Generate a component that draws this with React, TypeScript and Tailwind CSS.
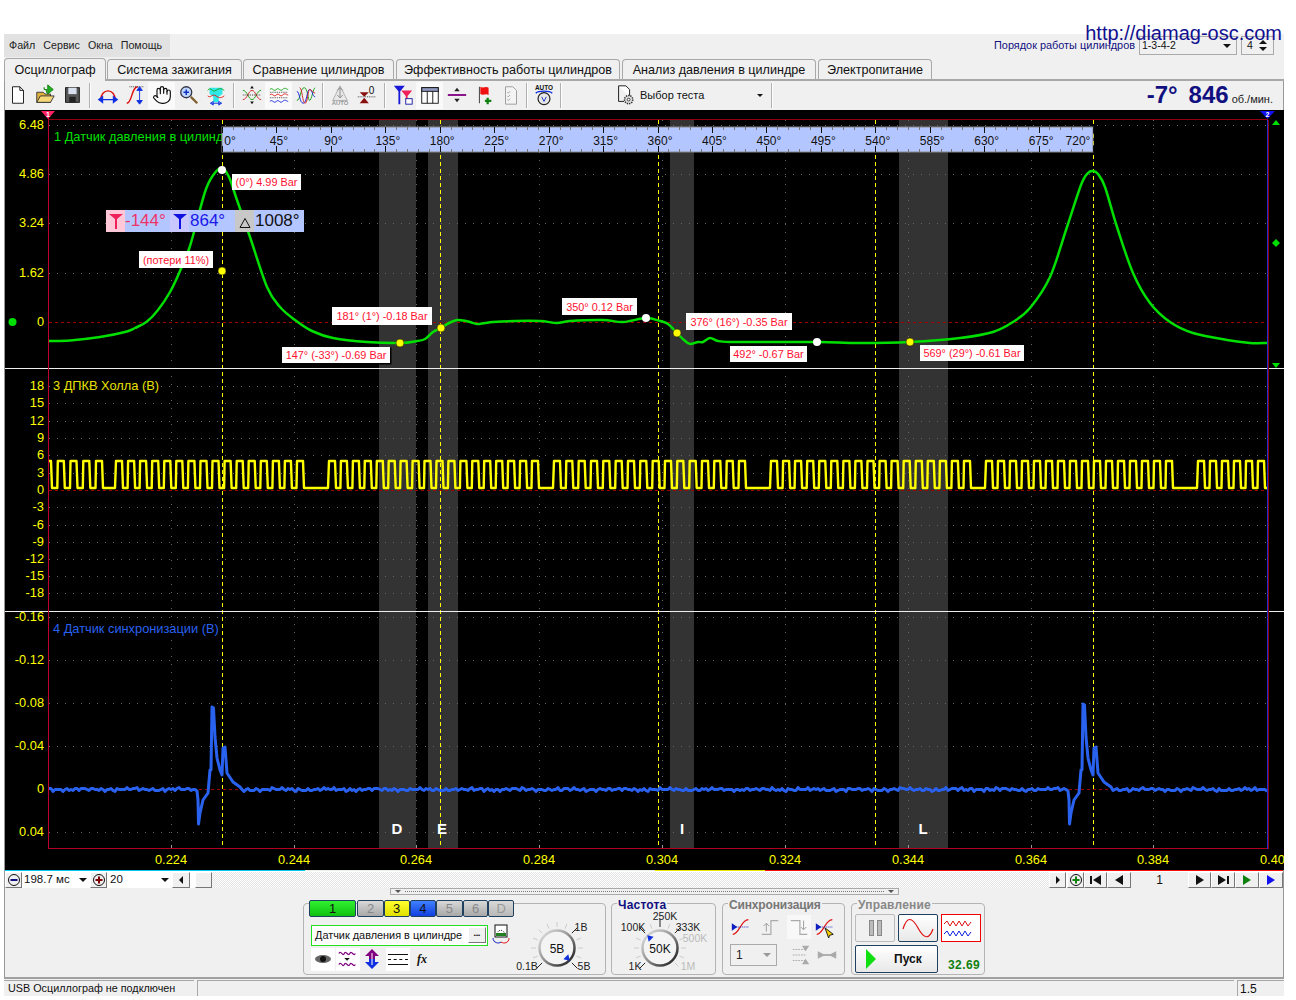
import React from "react";
import { Hand } from "lucide-react";

const YEL = "#ffff00";
const GRN = "#00e000";
const BLU = "#2a62f0";
const RED = "#ff1030";

function smooth(p: number[][]): string {
  let d = `M${p[0][0]} ${p[0][1]}`;
  for (let i = 0; i < p.length - 1; i++) {
    const a = p[Math.max(i - 1, 0)], b = p[i], c = p[i + 1], e = p[Math.min(i + 2, p.length - 1)];
    const k = 1 / 6;
    d += ` C${(b[0] + (c[0] - a[0]) * k).toFixed(1)} ${(b[1] + (c[1] - a[1]) * k).toFixed(1)} ${(c[0] - (e[0] - b[0]) * k).toFixed(1)} ${(c[1] - (e[1] - b[1]) * k).toFixed(1)} ${c[0]} ${c[1]}`;
  }
  return d;
}

const pressure = [
  [49, 341], [70, 340.5], [100, 337], [125, 332], [135, 328], [147, 321.5], [158, 310], [170, 292], [180, 271], [190, 246], [205, 192], [214, 174], [222, 168], [229, 177], [237, 200], [250, 237], [267, 287], [280, 307], [295, 320], [312, 331], [333, 338], [367, 342], [400, 343], [417, 341], [425, 339], [433, 332], [441, 328], [449, 323], [457, 320], [463, 320.5], [470, 322], [477, 324], [485, 323], [493, 322], [515, 321], [540, 321], [557, 323], [570, 321], [603, 320], [623, 322], [646, 318], [660, 321], [668, 324], [677, 333], [684, 340], [690, 344], [698, 342], [703, 342], [710, 338], [718, 341], [730, 342], [770, 342], [820, 342], [860, 343], [910, 342], [960, 338], [993, 332], [1013, 322], [1030, 308], [1050, 277], [1067, 227], [1081, 185], [1088, 173], [1093, 171], [1098, 174], [1105, 187], [1117, 227], [1133, 273], [1150, 303], [1170, 322], [1193, 333], [1227, 340], [1250, 343], [1267, 343],
];

function yellowPath(): string {
  const gaps = [[102, 115], [303, 328], [538, 553], [745, 770], [970, 985], [1172, 1197], [1300, 1300]];
  const H = 461, L = 488;
  let start = 45;
  let d = `M${start} ${H}`;
  for (const [fall, rise] of gaps) {
    const span = fall - start - 6;
    const n = Math.max(Math.round(span / 12.2), 0);
    const per = n ? span / n : 0;
    for (let i = 0; i < n; i++) {
      const x = start + per * i;
      d += ` L${(x + 6).toFixed(1)} ${H} L${(x + 7).toFixed(1)} ${L} L${(x + per - 0.5).toFixed(1)} ${L} L${(x + per).toFixed(1)} ${H}`;
    }
    d += ` L${fall} ${H} L${fall + 1} ${L} L${rise} ${L} L${rise + 1} ${H}`;
    start = rise + 1;
  }
  return d;
}

function bluePath(): string {
  const pts: number[][] = [];
  const noise = (x: number) => Math.round(Math.sin(x * 0.73) * 0.9 + Math.sin(x * 1.91 + 1) * 0.8 + Math.sin(x * 0.13) * 0.5);
  const spike = (o: number, s: number) => [
    [197 + o, 791], [198 + o, 800], [198.5 + o, 824], [200 + o, 813], [203 + o, 800], [208 + o, 793], [210 + o, 770],
    [211 + o, 770], [212 + o, 707 - s], [213.5 + o, 708 - s], [215 + o, 737], [217 + o, 758], [220 + o, 770], [222 + o, 775], [223 + o, 748], [225 + o, 747], [227 + o, 773], [233 + o, 782], [240 + o, 787],
  ];
  for (let x = 49; x < 196; x += 2) pts.push([x, 789.5 + noise(x)]);
  pts.push(...spike(0, 0));
  for (let x = 242; x < 1067; x += 2) pts.push([x, 789.5 + noise(x)]);
  pts.push(...spike(871, 3));
  for (let x = 1113; x <= 1267; x += 2) pts.push([x, 789.5 + noise(x)]);
  return "M" + pts.map((p) => `${p[0]} ${p[1].toFixed(1)}`).join(" L");
}

function Callout({ x, y, w, h, t, shadow }: { x: number; y: number; w: number; h: number; t: string; shadow?: boolean }) {
  return (
    <g>
      {shadow && <rect x={x + 1} y={y + 1} width={w} height={h} fill="#000" stroke="#000" />}
      <rect x={x} y={y} width={w} height={h} fill="#fff" />
      <text x={x + w / 2} y={y + h / 2 + 4} textAnchor="middle" fontSize="10.9" fill={RED}>{t}</text>
    </g>
  );
}

function Scope() {
  const vx = [171, 294, 416, 539, 662, 785, 908, 1031, 1153];
  const xl = ["0.224", "0.244", "0.264", "0.284", "0.304", "0.324", "0.344", "0.364", "0.384"];
  const hTop = [125, 174, 223, 273];
  const hMid = [386, 403, 421, 438, 455, 473, 507, 525, 542, 559, 576, 593];
  const hBot = [617, 660, 703, 746, 832];
  const deg = [0, 45, 90, 135, 180, 225, 270, 315, 360, 405, 450, 495, 540, 585, 630, 675, 720];
  const rx = (i: number) => 222 + i * 54.44;
  return (
    <svg viewBox="5 110 1279 760" width={1279} height={760} className="block bg-black">
      <defs>
        <clipPath id="plot"><rect x="49" y="120" width="1218" height="728" /></clipPath>
      </defs>
      {[[379, 37], [428, 30], [670, 24], [899, 49]].map(([x, w]) => (
        <rect key={x} x={x} y={120} width={w} height={728} fill="#333" />
      ))}
      {vx.map((x) => <line key={x} x1={x + 0.5} x2={x + 0.5} y1={120} y2={848} stroke="#666" strokeDasharray="1 7" />)}
      {[...hTop, ...hMid, ...hBot].map((y) => <line key={y} x1={49} x2={1267} y1={y + 0.5} y2={y + 0.5} stroke="#666" strokeDasharray="1 7" />)}
      {[322, 490, 789].map((y) => <line key={y} x1={49} x2={1267} y1={y + 0.5} y2={y + 0.5} stroke="#a00000" strokeDasharray="3 3" />)}
      {[222, 440, 658, 875, 1093].map((x) => <line key={x} x1={x + 0.5} x2={x + 0.5} y1={120} y2={848} stroke={YEL} strokeDasharray="4 3" />)}
      <g clipPath="url(#plot)" fill="none" strokeLinejoin="round">
        <path d={yellowPath()} stroke={YEL} strokeWidth={2.4} />
        <path d={smooth(pressure)} stroke={GRN} strokeWidth={2.5} />
        <path d={bluePath()} stroke={BLU} strokeWidth={3} />
      </g>
      <line x1={5} x2={1284} y1={368.5} y2={368.5} stroke="#eee" />
      <line x1={5} x2={1284} y1={611.5} y2={611.5} stroke="#eee" />
      <line x1={48} x2={1268} y1={119.5} y2={119.5} stroke="#900010" />
      <line x1={48} x2={1268} y1={848.5} y2={848.5} stroke="#b00020" />
      <line x1={48.5} x2={48.5} y1={116} y2={849} stroke="#c00030" />
      <line x1={1267.5} x2={1267.5} y1={120} y2={849} stroke="#2030d0" />
      <line x1={1268.5} x2={1268.5} y1={120} y2={849} stroke="#900010" />
      {vx.map((x) => <line key={x} x1={x + 0.5} x2={x + 0.5} y1={845} y2={848} stroke="#999" />)}

      <g fontSize="12.8">
        <text x="54" y="141" fill={GRN}>1 Датчик давления в цилиндре</text>
        <text x="53" y="390" fill="#e8e000">3 ДПКВ Холла (В)</text>
        <text x="53" y="633" fill={BLU}>4 Датчик синхронизации (В)</text>
        {[["6.48", 125], ["4.86", 174], ["3.24", 223], ["1.62", 273], ["0", 322]].map(([t, y]) => (
          <text key={t} x="44" y={Number(y) + 4} textAnchor="end" fill={YEL}>{t}</text>
        ))}
        {[["18", 386], ["15", 403], ["12", 421], ["9", 438], ["6", 455], ["3", 473], ["0", 490], ["-3", 507], ["-6", 525], ["-9", 542], ["-12", 559], ["-15", 576], ["-18", 593]].map(([t, y]) => (
          <text key={t} x="44" y={Number(y) + 4} textAnchor="end" fill={YEL}>{t}</text>
        ))}
        {[["-0.16", 617], ["-0.12", 660], ["-0.08", 703], ["-0.04", 746], ["0", 789], ["0.04", 832]].map(([t, y]) => (
          <text key={t} x="44" y={Number(y) + 4} textAnchor="end" fill={YEL}>{t}</text>
        ))}
        {vx.map((x, i) => <text key={x} x={x} y={864} textAnchor="middle" fill={YEL}>{xl[i]}</text>)}
        <text x="1276" y="864" textAnchor="middle" fill={YEL}>0.404</text>
      </g>
      {[["D", 397], ["E", 442], ["I", 682], ["L", 923]].map(([t, x]) => (
        <text key={t} x={x} y={834} textAnchor="middle" fontSize="15" fontWeight="bold" fill="#fff">{t}</text>
      ))}

      {/* ruler */}
      <rect x="222" y="127" width="871" height="25" fill="#b4c6ff" stroke="#888" />
      {Array.from({ length: 81 }).map((_, i) => {
        const x = Math.round(222 + i * 10.888) + 0.5;
        const maj = i % 5 === 0;
        return (
          <g key={i} stroke={maj ? "#111" : "#777"}>
            <line x1={x} x2={x} y1={127} y2={maj ? 133 : 130} />
            <line x1={x} x2={x} y1={maj ? 146 : 149} y2={152} />
          </g>
        );
      })}
      {deg.map((d, i) => (
        <text key={d} x={i === 0 ? 230 : i === 16 ? 1078 : rx(i) + 2.5} y={145} textAnchor="middle" fontSize="12" fill="#111">{d}°</text>
      ))}

      {/* cursor read-out */}
      <g fontSize="17">
        <rect x="106" y="210" width="198" height="22" fill="#b4c6ff" />
        <rect x="106" y="210" width="19" height="22" fill="#ffc8d8" />
        <path d="M109 214h14l-6 5v10h-2v-10z" fill="#f0205a" />
        <text x="125" y="226" fill="#ee3468">-144°</text>
        <rect x="170" y="210" width="19" height="22" fill="#c8c8ff" />
        <path d="M173 214h14l-6 5v10h-2v-10z" fill="#1010e0" />
        <text x="190" y="226" fill="#1818e8">864°</text>
        <rect x="235" y="210" width="19" height="22" fill="#c8c8c8" />
        <path d="M240 227.5h10l-5-9z" fill="none" stroke="#111" />
        <text x="255" y="226" fill="#111">1008°</text>
      </g>

      <Callout x={232} y={174} w={69} h={16} t="(0°) 4.99 Bar" />
      <Callout x={139} y={251} w={74} h={17} t="(потери 11%)" />
      <Callout x={332} y={307} w={100} h={18} t="181° (1°) -0.18 Bar" />
      <Callout x={282} y={347} w={108} h={16} t="147° (-33°) -0.69 Bar" shadow />
      <Callout x={562} y={298} w={75} h={17} t="350° 0.12 Bar" />
      <Callout x={686} y={313} w={106} h={17} t="376° (16°) -0.35 Bar" />
      <Callout x={730} y={346} w={77} h={16} t="492° -0.67 Bar" />
      <Callout x={920} y={345} w={104} h={16} t="569° (29°) -0.61 Bar" />

      {[[222, 170], [646, 318], [817, 342]].map(([x, y]) => <circle key={x} cx={x} cy={y} r={4} fill="#fff" />)}
      {[[222, 271], [400, 343], [441, 328], [677, 333], [910, 342]].map(([x, y]) => <circle key={x} cx={x} cy={y} r={4} fill={YEL} stroke="#000" strokeWidth={0.5} />)}
      <circle cx="12.5" cy="322" r="4" fill={GRN} />
      <path d="M1276 239l4 4-4 4-4-4z" fill={GRN} />
      <path d="M1272 125l4-5 4 5z" fill={GRN} />
      <path d="M1272 363l4 5 4-5z" fill={GRN} />
      <path d="M41 111h14l-7 8z" fill="#ff2060" />
      <text x="48" y="117" textAnchor="middle" fontSize="7" fontWeight="bold" fill="#fff">1</text>
      <path d="M1260 111h15l-7.5 8z" fill="#1010f0" />
      <text x="1267.5" y="117" textAnchor="middle" fontSize="7" fontWeight="bold" fill="#fff">2</text>
    </svg>
  );
}

const I = ({ children, s = 22 }: { children: React.ReactNode; s?: number }) => (
  <svg width={s} height={s} viewBox="0 0 24 24" fill="none">{children}</svg>
);

function Sep({ w }: { w: number }) {
  return <div className="flex h-[25px] justify-center" style={{ width: w }}><div className="h-full w-[2px] border-l border-r border-l-[#b0b0b0] border-r-white" /></div>;
}
function Tb({ children, on }: { children: React.ReactNode; on?: boolean }) {
  return <div className={`flex h-[27px] w-[27px] shrink-0 items-center justify-center ${on ? "bg-[#fafafa]" : ""}`}>{children}</div>;
}

function Toolbar() {
  return (
    <div className="flex h-[28px] items-center bg-[#f0f0f0]">
      <div className="-ml-[1px] flex items-center">
        <Tb><I><path d="M6 3h8l4 4v14H6z" fill="#fff" stroke="#111" /><path d="M14 3v4h4" stroke="#111" /></I></Tb>
        <Tb><I><path d="M3 20V9h7l2 2h6v9z" fill="#e0b040" stroke="#333" /><path d="M3 20l4-7h15l-4 7z" fill="#f4d878" stroke="#333" /><path d="M14 10V6h-3V3.5M15 1l6 5-6 5z" fill="#20b020" stroke="#108010" /></I></Tb>
        <Tb><I><rect x="5" y="4" width="15" height="16" fill="#555" stroke="#111" /><rect x="8" y="4" width="9" height="7" fill="#d8e0f0" /><rect x="9" y="14" width="7" height="6" fill="#222" /></I></Tb>
        <Sep w={9} />
        <Tb><I><path d="M4 18C4 4 20 4 20 18" stroke="#e01010" strokeWidth="1.6" /><path d="M2 17h20M2 17l4-3v6zM22 17l-4-3v6z" stroke="#1030e0" strokeWidth="1.5" fill="#1030e0" /></I></Tb>
        <Tb><I><path d="M3 21C9 21 8 3 15 3" stroke="#e01010" strokeWidth="1.5" /><path d="M6 3h16" stroke="#333" strokeDasharray="1 1" /><path d="M17 5v15M17 3l-3 4h6zM17 22l-3-4h6z" stroke="#1030e0" fill="#1030e0" /></I></Tb>
        <Tb on><Hand size={20} strokeWidth={1.4} color="#111" /></Tb>
        <Tb><I><circle cx="9" cy="9" r="6" fill="#c0d8ff" stroke="#334" strokeWidth="1.4" /><path d="M9 6v6M6 9h6" stroke="#1030c0" strokeWidth="1.6" /><path d="M14 14l7 7" stroke="#806030" strokeWidth="2.5" /></I></Tb>
        <Tb><I><path d="M5 4h14v7l-4 3v6H9v-6l-4-3z" fill="#30e8e8" /><path d="M3 7c3-5 5 3 9 0s6-2 9 0" stroke="#10a010" /><path d="M3 13c3 3 5-3 9 0s6 2 9 0" stroke="#e01010" /><path d="M6 21h12M6 21l3-2v4zM18 21l-3-2v4z" stroke="#1030e0" /></I></Tb>
        <Sep w={9} />
        <Tb><I><path d="M2 7c5 0 6 10 10 10s5-10 10-10" stroke="#10a010" /><path d="M2 17c5 0 6-10 10-10s5 10 10 10" stroke="#d02020" /><path d="M2 12h20" stroke="#333" strokeDasharray="1 1" /><path d="M12 2l-2 3h4zM12 22l-2-3h4z" fill="#111" /></I></Tb>
        <Tb on><I><path d="M2 6c3-3 4 3 7 0s4 3 7 0 4 0 6 0" stroke="#10a010" /><path d="M2 9h20M2 15h20" stroke="#333" strokeDasharray="1 1" /><path d="M2 12c3-3 4 3 7 0s4 3 7 0 4 0 6 0" stroke="#e01010" /><path d="M2 19c3-3 4 3 7 0s4 3 7 0 4 0 6 0" stroke="#1020e0" /></I></Tb>
        <Tb><I><path d="M2 18C6 18 6 4 10 4s4 14 6 14 4-14 6-14" stroke="#10a010" /><path d="M2 8c3 0 3 13 7 13s4-15 7-15 3 8 6 8" stroke="#1020e0" /><path d="M5 4c3 0 3 17 6 17s3-15 5-15 4 4 6 4" stroke="#d02020" /></I></Tb>
        <Sep w={7} />
        <Tb><I><path d="M12 2l8 16H4z" fill="#e8e8e8" stroke="#aaa" /><path d="M12 4v11M9 7l3-3 3 3M9 12l3 3 3-3" stroke="#888" /><text x="12" y="23" fontSize="6.5" fontWeight="bold" textAnchor="middle" fill="#999">AUTO</text></I></Tb>
        <Tb><I><path d="M4 9h10l-5 5zM4 21h10l-5-6z" fill="#8a1010" /><path d="M2 14h19" stroke="#333" strokeDasharray="1 1" /><text x="17" y="11" fontSize="11" textAnchor="middle" fill="#111">0</text></I></Tb>
        <Sep w={9} />
        <Tb><I><path d="M2 2h12l-5 6v14H7V8z" fill="#1818d8" /><path d="M10 7h12l-5 6v5h-2v-5z" fill="#f0205a" /><rect x="15" y="16" width="7" height="6" fill="#fff" stroke="#1818a0" /></I></Tb>
        <Tb on><I><rect x="3" y="4" width="18" height="17" fill="#fff" stroke="#111" /><rect x="3" y="4" width="18" height="4" fill="#9098c0" stroke="#111" /><path d="M9 8v13M15 8v13" stroke="#111" /></I></Tb>
        <Tb><I><path d="M2 12h20" stroke="#800080" strokeWidth="2" /><path d="M9 8h6l-3-4zM9 16h6l-3 4z" fill="#222" /></I></Tb>
        <Tb><I><path d="M7 3v18" stroke="#333" /><path d="M8 3c3 2 6-1 9 1v8c-3-2-6 1-9-1z" fill="#f01010" /><path d="M16 15v7M13 18.500h7" stroke="#108010" strokeWidth="2.5" /></I></Tb>
        <Tb><I><path d="M6 3h8l4 4v15H6z" fill="#f4f4f4" stroke="#999" /><path d="M8 9l1 1 2-2M8 13l1 1 2-2M8 17l1 1 2-2" stroke="#999" /></I></Tb>
        <Sep w={6} />
        <Tb><I><text x="12" y="6" fontSize="7" fontWeight="bold" textAnchor="middle" fill="#111">AUTO</text><path d="M3 10c3-3 15-3 18 0" stroke="#1030e0" strokeWidth="1.5" /><circle cx="12" cy="16" r="6.500" fill="#e8e8e8" stroke="#222" strokeWidth="1.3" /><path d="M9.500 14l2.500 5 2.500-5" stroke="#1030c0" /></I></Tb>
        <Sep w={8} />
      </div>
      <div className="ml-[49px] flex w-[156px] items-center text-[11px] text-[#111]">
        <I s={22}><path d="M5 2h8l4 4v8" stroke="#111" fill="#fff" /><path d="M5 2v17h6" stroke="#111" /><circle cx="16" cy="17" r="4.500" fill="#ddd" stroke="#333" strokeWidth="1.6" strokeDasharray="1.500 1" /><circle cx="16" cy="17" r="1.500" fill="#fff" stroke="#333" /></I>
        <span className="ml-[4px] grow">Выбор теста</span>
        <span className="mr-[7px] h-0 w-0 border-x-[3px] border-t-[3px] border-x-transparent border-t-[#111]" />
      </div>
      <Sep w={4} />
      <div className="ml-auto mr-[10px] flex items-baseline font-bold text-[#101080]">
        <span className="text-[24px] leading-none">-7°</span>
        <span className="ml-[11px] text-[24px] leading-none">846</span>
        <span className="ml-[3px] text-[11px] font-normal text-[#222]">об./мин.</span>
      </div>
    </div>
  );
}

function Tab({ t, w, on, ml }: { t: string; w: number; on?: boolean; ml: number }) {
  return (
    <div
      style={{ width: w, marginLeft: ml }}
      className={`flex shrink-0 items-center justify-center rounded-t-[4px] border border-b-0 border-[#a8a8a8] bg-[#f0f0f0] text-[12.6px] text-[#111] ${on ? "z-10 -mb-[2px] h-[23px]" : "h-[20px] pt-[1px]"}`}
    >
      {t}
    </div>
  );
}

const raised = "border border-t-white border-l-white border-r-[#777] border-b-[#777] bg-[#f0f0f0]";
const tri = {
  r: "border-y-[5px] border-l-[8px] border-y-transparent",
  l: "border-y-[5px] border-r-[8px] border-y-transparent",
};

function Nav({ w, children }: { w: number; children: React.ReactNode }) {
  return <div style={{ width: w }} className={`flex h-[16px] shrink-0 items-center justify-center gap-[1px] ${raised}`}>{children}</div>;
}

function ScrollRow() {
  return (
    <div className="flex h-[17px] items-center bg-white text-[11.5px] text-[#111]">
      <Nav w={17}><svg width="14" height="14"><circle cx="7" cy="7" r="5.500" fill="none" stroke="#111" /><path d="M3.500 7h7" stroke="#101080" strokeWidth="2" /></svg></Nav>
      <div className="flex w-[68px] items-center pl-[2px]"><span className="grow">198.7 мс</span><span className="mr-[3px] h-0 w-0 border-x-[4px] border-t-[4px] border-x-transparent border-t-[#111]" /></div>
      <Nav w={17}><svg width="14" height="14"><circle cx="7" cy="7" r="5.500" fill="none" stroke="#111" /><path d="M3.500 7h7M7 3.500v7" stroke="#800000" strokeWidth="2" /></svg></Nav>
      <div className="flex w-[65px] items-center pl-[3px]"><span className="grow">20</span><span className="mr-[3px] h-0 w-0 border-x-[4px] border-t-[4px] border-x-transparent border-t-[#111]" /></div>
      <Nav w={18}><span className="h-0 w-0 border-y-[4px] border-r-[4px] border-y-transparent border-r-[#111]" /></Nav>
      <div className="w-[5px]" />
      <div className={`h-[16px] w-[17px] ${raised}`} />
      <div className="h-[16px] grow bg-[repeating-conic-gradient(#e4e4e4_0%_25%,#ffffff_0%_50%)] bg-[length:2px_2px]" />
      <Nav w={17}><span className="h-0 w-0 border-y-[4px] border-l-[4px] border-y-transparent border-l-[#111]" /></Nav>
      <div className="w-[1px]" />
      <Nav w={17}><svg width="14" height="14"><circle cx="7" cy="7" r="5.500" fill="none" stroke="#111" /><path d="M3.500 7h7M7 3.500v7" stroke="#108010" strokeWidth="2" /></svg></Nav>
      <Nav w={23}><span className="h-[8px] w-[2px] bg-[#111]" /><span className={`h-0 w-0 ${tri.l} border-r-[#111]`} /></Nav>
      <Nav w={24}><span className={`h-0 w-0 ${tri.l} border-r-[#111]`} /></Nav>
      <div className="w-[57px] bg-[#f0f0f0] text-center text-[12px] leading-[16px]">1</div>
      <Nav w={23}><span className={`h-0 w-0 ${tri.r} border-l-[#111]`} /></Nav>
      <Nav w={24}><span className={`h-0 w-0 ${tri.r} border-l-[#111]`} /><span className="h-[8px] w-[2px] bg-[#111]" /></Nav>
      <Nav w={24}><span className={`h-0 w-0 ${tri.r} border-l-[#108010]`} /></Nav>
      <Nav w={24}><span className={`h-0 w-0 ${tri.r} border-l-[#1010f0]`} /></Nav>
    </div>
  );
}

function Dial({ w, cx, label, angle, labels, strong }: { w: number; cx: number; label: string; angle: number; labels: [string, number, number, string?][]; strong: number[] }) {
  const cy = 42;
  const id = `g${label}`;
  return (
    <svg width={w} height={68} className="shrink-0">
      <defs>
        <linearGradient id={id} x1="0" y1="0" x2="1" y2="1">
          <stop offset="0" stopColor="#e8e8e8" />
          <stop offset="0.45" stopColor="#999" />
          <stop offset="1" stopColor="#111" />
        </linearGradient>
      </defs>
      {Array.from({ length: 13 }).map((_, i) => {
        const a = ((135 + i * 22.5) * Math.PI) / 180;
        const s = strong.includes(i);
        return <line key={i} x1={cx + Math.cos(a) * 21} y1={cy + Math.sin(a) * 21} x2={cx + Math.cos(a) * (s ? 29 : 26)} y2={cy + Math.sin(a) * (s ? 29 : 26)} stroke={s ? "#222" : "#ccc"} />;
      })}
      <circle cx={cx} cy={cy} r={17.500} fill="#f4f4f4" stroke={`url(#${id})`} strokeWidth="2.500" />
      <text x={cx} y={cy + 4.500} fontSize="12" textAnchor="middle" fill="#111">{label}</text>
      <path
        transform={`translate(${cx + Math.cos((angle * Math.PI) / 180) * 15} ${cy + Math.sin((angle * Math.PI) / 180) * 15}) rotate(${angle + 90})`}
        d="M-3.500 2.500L0-3 3.500 2.500z"
        fill="#1030e0"
      />
      {labels.map(([t, x, y, c]) => <text key={t} x={x} y={y} fontSize="10.500" textAnchor="middle" fill={c || "#222"}>{t}</text>)}
    </svg>
  );
}

function Group({ w, title, color, tight, children }: { w: number; title?: string; color?: string; tight?: boolean; children: React.ReactNode }) {
  return (
    <div style={{ width: w }} className="relative mt-[8px] h-[72px] shrink-0 rounded-[4px] border border-[#b4b4b4]">
      {title && (
        <span style={{ color }} className={`absolute -top-[6px] left-[5px] bg-[#f0f0f0] px-[1px] text-[12px] font-bold leading-[14px] ${tight ? "tracking-[-0.15px]" : "tracking-[0.2px]"}`}>
          {title}
        </span>
      )}
      {children}
    </div>
  );
}

function ChBtn({ t, w, cls }: { t: string; w: number; cls: string }) {
  return (
    <div style={{ width: w }} className={`flex h-[17px] items-center justify-center rounded-[2px] border border-[#204060] text-[13px] ${cls}`}>{t}</div>
  );
}

function ControlPanel() {
  return (
    <div className="h-[89px] bg-[#f0f0f0]">
      <div className="ml-[385px] mt-0 flex h-[7px] w-[509px] items-center border border-[#aaa] px-[4px]">
        <span className="h-0 w-0 border-x-[3px] border-t-[3px] border-x-transparent border-t-[#555]" />
        <span className="ml-[4px] grow border-t border-dotted border-[#777]" />
        <span className="ml-[4px] h-0 w-0 border-x-[3px] border-t-[3px] border-x-transparent border-t-[#555]" />
      </div>
      <div className="flex pl-[298px]">
        <Group w={303}>
          <div className="flex">
            <div className="w-[210px] pl-[5px]">
              <div className="-mt-[4px] flex">
                <ChBtn t="1" w={48} cls="bg-[linear-gradient(#30f030,#10c010)] text-[#111]" />
                <div className="w-[1px]" />
                <ChBtn t="2" w={27} cls="bg-[linear-gradient(#d8d8d8,#a8a8a8)] text-[#888]" />
                <ChBtn t="3" w={26} cls="bg-[linear-gradient(#ffff30,#e0e000)] text-[#111]" />
                <ChBtn t="4" w={27} cls="bg-[linear-gradient(#4080ff,#1040e0)] text-[#111]" />
                <ChBtn t="5" w={27} cls="bg-[linear-gradient(#d8d8d8,#a8a8a8)] text-[#888]" />
                <ChBtn t="6" w={26} cls="bg-[linear-gradient(#d8d8d8,#a8a8a8)] text-[#888]" />
                <ChBtn t="D" w={26} cls="bg-[linear-gradient(#d8d8d8,#b8b8b8)] text-[#999]" />
              </div>
              <div className="mt-[7px] flex items-center">
                <div className="ml-[2px] flex h-[21px] w-[177px] shrink-0 items-center justify-between border border-[#20e020] bg-white pl-[3px] pr-[1px] text-[10.9px] text-[#111]">
                  <span className="whitespace-nowrap">Датчик давления в цилиндре</span>
                  <span className={`flex h-[16px] w-[18px] shrink-0 items-center justify-center text-[6px] font-bold leading-none ${raised}`}>•••</span>
                </div>
                <svg width="20" height="22" className="ml-[3px] shrink-0"><rect x="4" y="1" width="12" height="12" fill="#fff" stroke="#111" /><path d="M6 10c1-5 6-5 8 0" stroke="#333" strokeDasharray="1 1" fill="none" /><rect x="5" y="9" width="10" height="3" fill="#208020" /><path d="M2 14c0 5 6 6 8 4" stroke="#1020c0" fill="none" /><path d="M18 14c0 5-5 6-8 4" stroke="#e01010" fill="none" /></svg>
              </div>
              <div className="mt-[1px] flex h-[24px] items-center">
                <div className="ml-[2px] flex h-[23px] w-[24px] items-center justify-center bg-white"><svg width="20" height="12"><ellipse cx="10" cy="6" rx="8" ry="4" fill="#666" /><circle cx="10" cy="6" r="3" fill="#111" /></svg></div>
                <div className="ml-[1px] flex h-[23px] w-[24px] items-center justify-center bg-white"><I s={22}><path d="M2 6c3-4 4 4 6 0s4 4 6 0 4 4 6 0" stroke="#800080" strokeWidth="1.300" /><path d="M2 18c3-4 4 4 6 0s4 4 6 0 4 4 6 0" stroke="#800080" strokeWidth="1.300" /><path d="M8 11h6l-3 3z" fill="#111" /></I></div>
                <div className="ml-[3px] flex h-[23px] w-[18px] items-center justify-center"><svg width="18" height="22"><path d="M9 1l7 7h-4v3H6V8H2z" fill="#800080" /><path d="M9 21l7-7h-4v-3H6v3H2z" fill="#1030e0" /><path d="M9 5v12" stroke="#fff" /></svg></div>
                <div className="ml-[5px] flex h-[23px] w-[24px] flex-col items-center justify-center gap-[4px] bg-white"><div className="w-[20px] border-t border-[#111]" /><div className="w-[20px] border-t border-dashed border-[#111]" /><div className="w-[20px] border-t border-[#111]" /></div>
                <span className="ml-[7px] font-['Liberation_Serif',serif] text-[12px] font-bold italic text-[#111]">fx</span>
              </div>
            </div>
            <div className="pl-[1px] pt-[2px]">
              <Dial w={88} cx={42} label="5В" angle={45} strong={[0, 8, 12]} labels={[["1В", 66, 25], ["5В", 69, 64], ["0.1В", 12, 64]]} />
            </div>
          </div>
        </Group>
        <div className="w-[5px]" />
        <Group w={105} title="Частота" color="#101080">
          <div className="pt-[2px]">
            <Dial w={103} cx={48} label="50K" angle={225} strong={[0, 4, 6, 8]} labels={[["100K", 21, 25], ["250K", 53, 14], ["333K", 76, 25], ["500K", 83, 36, "#bbb"], ["1M", 76, 64, "#bbb"], ["1K", 23, 64]]} />
          </div>
        </Group>
        <div className="w-[6px]" />
        <Group w={123} title="Синхронизация" color="#777" tight>
          <div className="flex items-center pl-[4px] pt-[11px]">
            <div className="flex h-[24px] w-[28px] items-center justify-center"><I><path d="M3 20C10 20 12 4 20 4" stroke="#e01010" strokeWidth="1.300" /><path d="M3 12h18" stroke="#1020c0" strokeDasharray="1 1" /><path d="M2 8l6 4-6 4z" fill="#1020c0" /></I></div>
            <div className="ml-[1px] flex h-[24px] w-[28px] items-center justify-center"><I><path d="M3 20h10V5h8" stroke="#aaa" strokeWidth="1.300" /><path d="M8 8v9M5 11l3-3 3 3" stroke="#999" /></I></div>
            <div className="ml-[3px] flex h-[24px] w-[24px] items-center justify-center bg-[#f8f8f8]"><I><path d="M3 5h10v15h8" stroke="#aaa" strokeWidth="1.300" /><path d="M17 5v10M14 12l3 3 3-3" stroke="#999" /></I></div>
            <div className="ml-[0px] flex h-[24px] w-[28px] items-center justify-center"><I><path d="M3 20C10 20 12 4 20 4" stroke="#e01010" strokeWidth="1.300" /><path d="M3 12h18" stroke="#1020c0" strokeDasharray="1 1" /><path d="M2 8l6 4-6 4z" fill="#1020c0" /><path d="M12 13l9 7-4 1-1 3z" fill="#ffd000" stroke="#111" /></I></div>
          </div>
          <div className="mt-[5px] flex items-center pl-[7px]">
            <div className="flex h-[22px] w-[47px] items-center justify-between border border-[#aaa] pl-[5px] pr-[5px] text-[12px] text-[#222]">1<span className="h-0 w-0 border-x-[4px] border-t-[4px] border-x-transparent border-t-[#999]" /></div>
            <div className="ml-[10px] flex w-[28px] justify-center"><I><path d="M3 6h14M3 12h14M3 18h14" stroke="#aaa" strokeDasharray="2 1" /><path d="M13 2h8l-4 6zM13 22h8l-4-6z" fill="#aaa" /></I></div>
            <div className="ml-[-2px] flex w-[28px] justify-center"><I><path d="M2 8l8 4-8 4zM22 8l-8 4 8 4z" fill="#aaa" /><path d="M2 12h20" stroke="#aaa" strokeWidth="2" /></I></div>
          </div>
        </Group>
        <div className="w-[6px]" />
        <Group w={134} title="Управление" color="#888">
          <div className="flex gap-[3px] pl-[3px] pt-[10px]">
            <div className="flex h-[28px] w-[40px] items-center justify-center gap-[3px] rounded-[2px] border border-[#bbb]"><span className="h-[16px] w-[5px] border border-[#888] bg-[#bbb]" /><span className="h-[16px] w-[5px] border border-[#888] bg-[#bbb]" /></div>
            <div className="flex h-[28px] w-[40px] items-center justify-center rounded-[2px] border border-[#204060] bg-[linear-gradient(#fff,#e8e8e8)]"><svg width="34" height="24"><path d="M2 13C6 0 11 1 17 12s11 12 15 1" stroke="#e01010" fill="none" strokeWidth="1.200" /></svg></div>
            <div className="flex h-[28px] w-[40px] items-center justify-center border border-[#f00000] bg-white"><svg width="36" height="22"><path d="M1 7l3-3 3 5 3-5 3 5 3-5 3 5 3-5 3 5 3-4" stroke="#e01010" fill="none" /><path d="M1 17l3-3 3 5 3-5 3 5 3-5 3 5 3-5 3 5 3-4" stroke="#1020e0" fill="none" /></svg></div>
          </div>
          <div className="mt-[2px] flex items-center pl-[3px]">
            <div className="flex h-[28px] w-[83px] items-center rounded-[2px] border border-[#204060] bg-[linear-gradient(#fff,#e8e8e8)] pl-[10px]">
              <span className="h-0 w-0 border-y-[10px] border-l-[10px] border-y-transparent border-l-[#10e010]" />
              <span className="ml-[18px] text-[12px] font-bold text-[#111]">Пуск</span>
            </div>
            <span className="ml-[10px] mt-[12px] text-[12px] font-bold tracking-[0.4px] text-[#108010]">32.69</span>
          </div>
        </Group>
      </div>
    </div>
  );
}

export default function App() {
  return (
    <div className="h-[1000px] w-[1296px] overflow-hidden bg-white font-['Liberation_Sans',Arial,sans-serif]">
      <div className="h-[34px]" />
      <div className="relative ml-[4px] w-[1280px] bg-[#f0f0f0]">
        <div className="flex h-[23px] items-center">
          <div className="flex h-full w-[166px] items-center gap-[8px] bg-[#e2e2e2] pl-[5px] text-[10.7px] text-[#222]">
            <span>Файл</span><span>Сервис</span><span>Окна</span><span>Помощь</span>
          </div>
          <span className="ml-auto text-[10.9px] text-[#101080]">Порядок работы цилиндров</span>
          <div className="ml-[4px] flex h-[19px] w-[98px] items-center justify-between border border-[#aaa] bg-[#f0f0f0] pl-[2px] pr-[5px] text-[10.500px] text-[#111]">1-3-4-2<span className="h-0 w-0 border-x-[4px] border-t-[4px] border-x-transparent border-t-[#111]" /></div>
          <div className="ml-[4px] mr-[10px] flex h-[19px] w-[33px] items-center justify-between border border-[#aaa] pl-[5px] pr-[6px] text-[10.500px] text-[#111]">4<span className="flex flex-col gap-[3px]"><span className="h-0 w-0 border-x-[4px] border-b-[4px] border-x-transparent border-b-[#111]" /><span className="h-0 w-0 border-x-[4px] border-t-[4px] border-x-transparent border-t-[#111]" /></span></div>
          <span className="absolute -top-[12px] right-[2px] text-[20px] leading-[23px] text-[#101090]">http://diamag-osc.com</span>
        </div>
        <div className="flex h-[24px] items-end border-b-2 border-[#a8a8a8]">
          <Tab t="Осциллограф" w={102} on ml={0} />
          <Tab t="Система зажигания" w={135} ml={1} />
          <Tab t="Сравнение цилиндров" w={151} ml={1} />
          <Tab t="Эффективность работы цилиндров" w={224} ml={2} />
          <Tab t="Анализ давления в цилиндре" w={194} ml={2} />
          <Tab t="Электропитание" w={114} ml={2} />
        </div>
        <div className="border-x border-[#999]">
          <Toolbar />
          <div className="h-[1px] bg-[#f0f0f0]" />
          <Scope />
          <div className="flex h-[1px]">
            <div className="w-[300px] bg-[#00c8f0]" />
            <div className="w-[350px] bg-[#e8f0e8]" />
            <div className="w-[110px] bg-[#e8e800]" />
            <div className="grow bg-[#f01010]" />
          </div>
          <ScrollRow />
          <ControlPanel />
        </div>
        <div className="h-[2px] bg-[#a0a0a0]" />
        <div className="flex h-[17px] pt-[1px] text-[10.8px] text-[#111]">
          <div className="flex w-[190px] items-center border-t border-[#a8a8a8] pl-[4px]">USB Осциллограф не подключен</div>
          <div className="ml-[3px] w-[1037px] border-l border-t border-[#a8a8a8]" />
          <div className="ml-[3px] flex grow items-center border-l border-t border-[#a8a8a8] pl-[2px] text-[12px]">1.5</div>
        </div>
      </div>
    </div>
  );
}
